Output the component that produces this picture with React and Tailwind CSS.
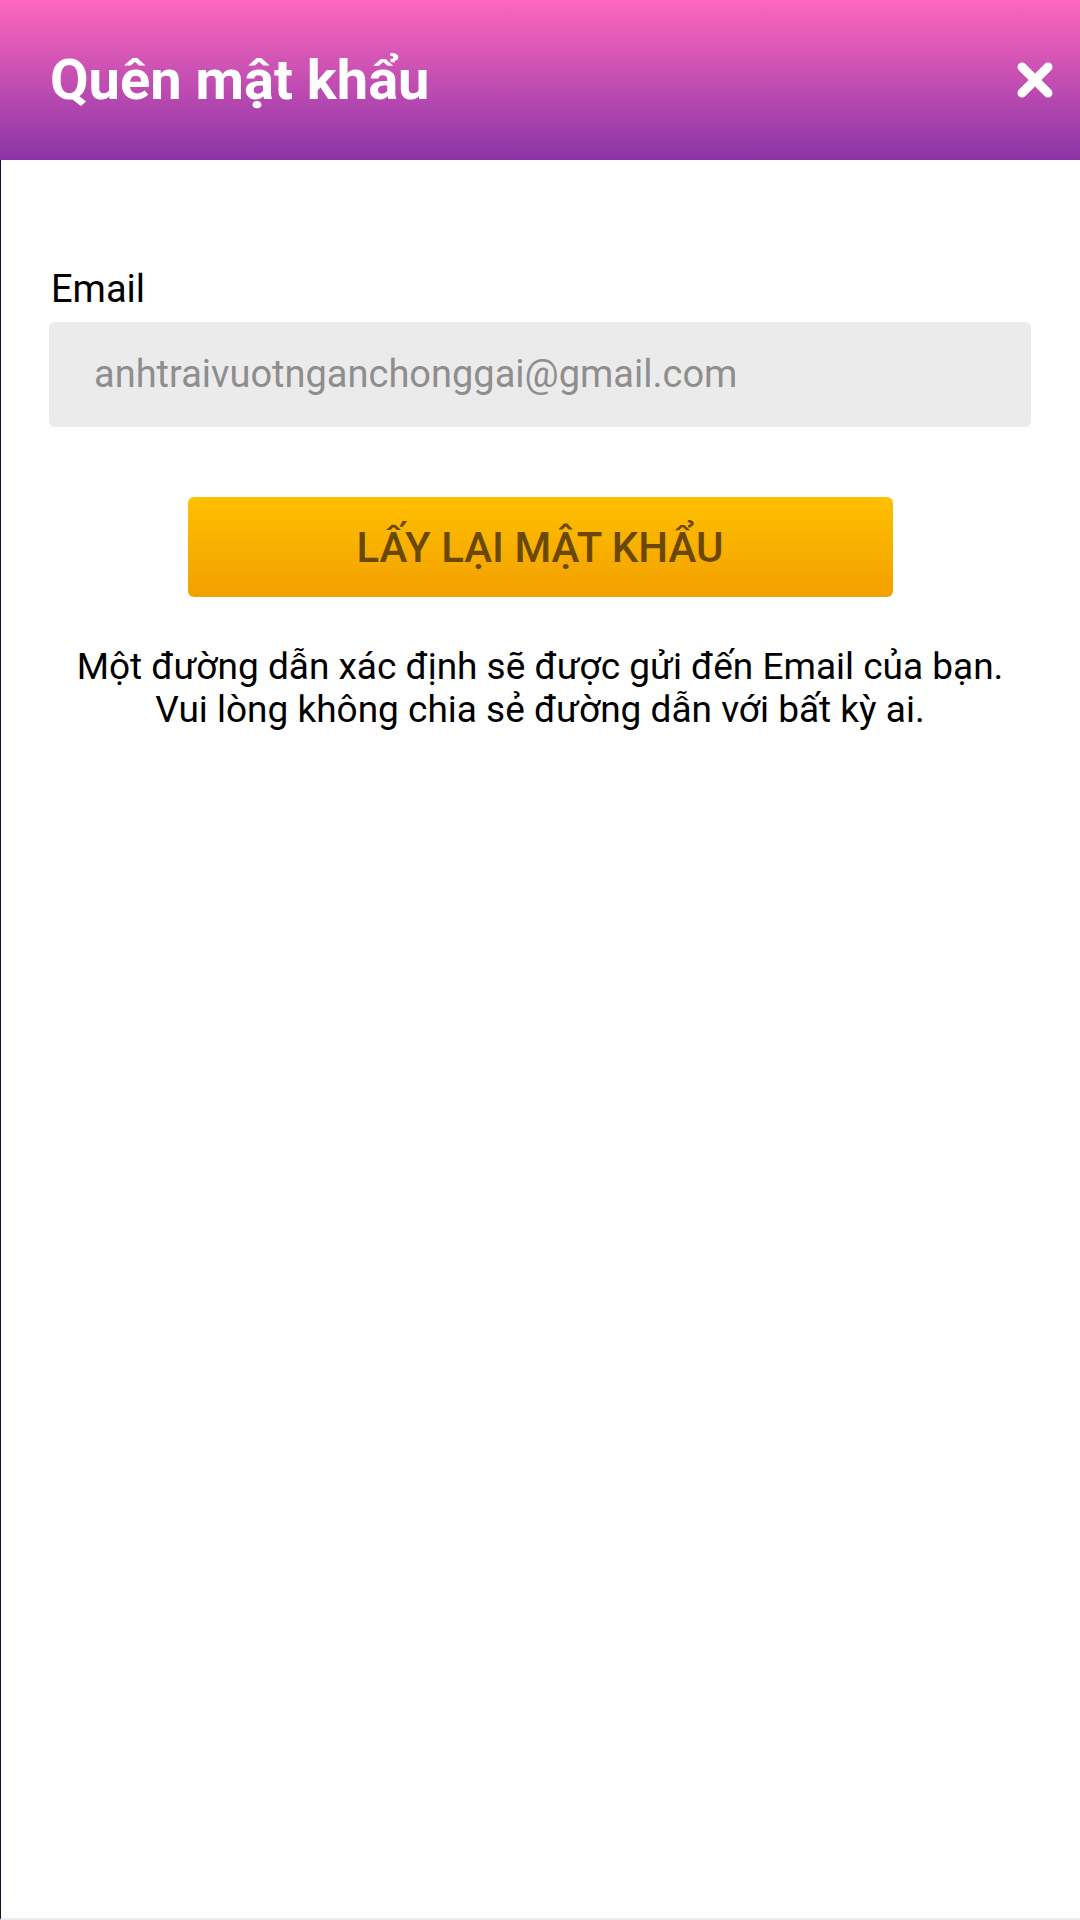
export default function App() {
  return (
    <div className="w-[1080px] h-[1920px] flex flex-col bg-white" style={{ fontFamily: "Roboto, 'Noto Sans', sans-serif" }}>
      <div className="h-[160px] shrink-0 flex items-center justify-between pl-[50px] pr-[27px] bg-gradient-to-b from-[#ff66bd] to-[#8c33a6]">
        <h1 className="text-[56px] font-bold text-white leading-none">Quên mật khẩu</h1>
        <svg width="36" height="36" viewBox="0 0 36 36" className="block">
          <path d="M5 5 L31 31 M31 5 L5 31" stroke="white" strokeWidth="9" strokeLinecap="round" fill="none" />
        </svg>
      </div>
      <div className="flex-1 flex flex-col border-l border-l-[#1c0b2e] border-b-2 border-b-[#ececec] pl-[48px] pr-[49px] pt-[106px]">
        <label className="text-[38px] leading-[46px] text-black pl-[2px]">Email</label>
        <div className="mt-[10px] h-[105px] rounded-[6px] bg-[#ebebeb] flex items-center pl-[45px]">
          <span className="text-[38px] text-[#8e8e8e]">anhtraivuotnganchonggai@gmail.com</span>
        </div>
        <div className="mt-[70px] flex justify-center">
          <button className="w-[705px] h-[100px] rounded-[6px] bg-gradient-to-b from-[#ffc000] to-[#f2a000] text-[42px] font-medium text-[#6b4800] flex items-center justify-center">
            LẤY LẠI MẬT KHẨU
          </button>
        </div>
        <p className="mt-[48px] text-center text-[37px] leading-[43px] text-black">
          Một đường dẫn xác định sẽ được gửi đến Email của bạn.
          <br />
          Vui lòng không chia sẻ đường dẫn với bất kỳ ai.
        </p>
      </div>
    </div>
  );
}
